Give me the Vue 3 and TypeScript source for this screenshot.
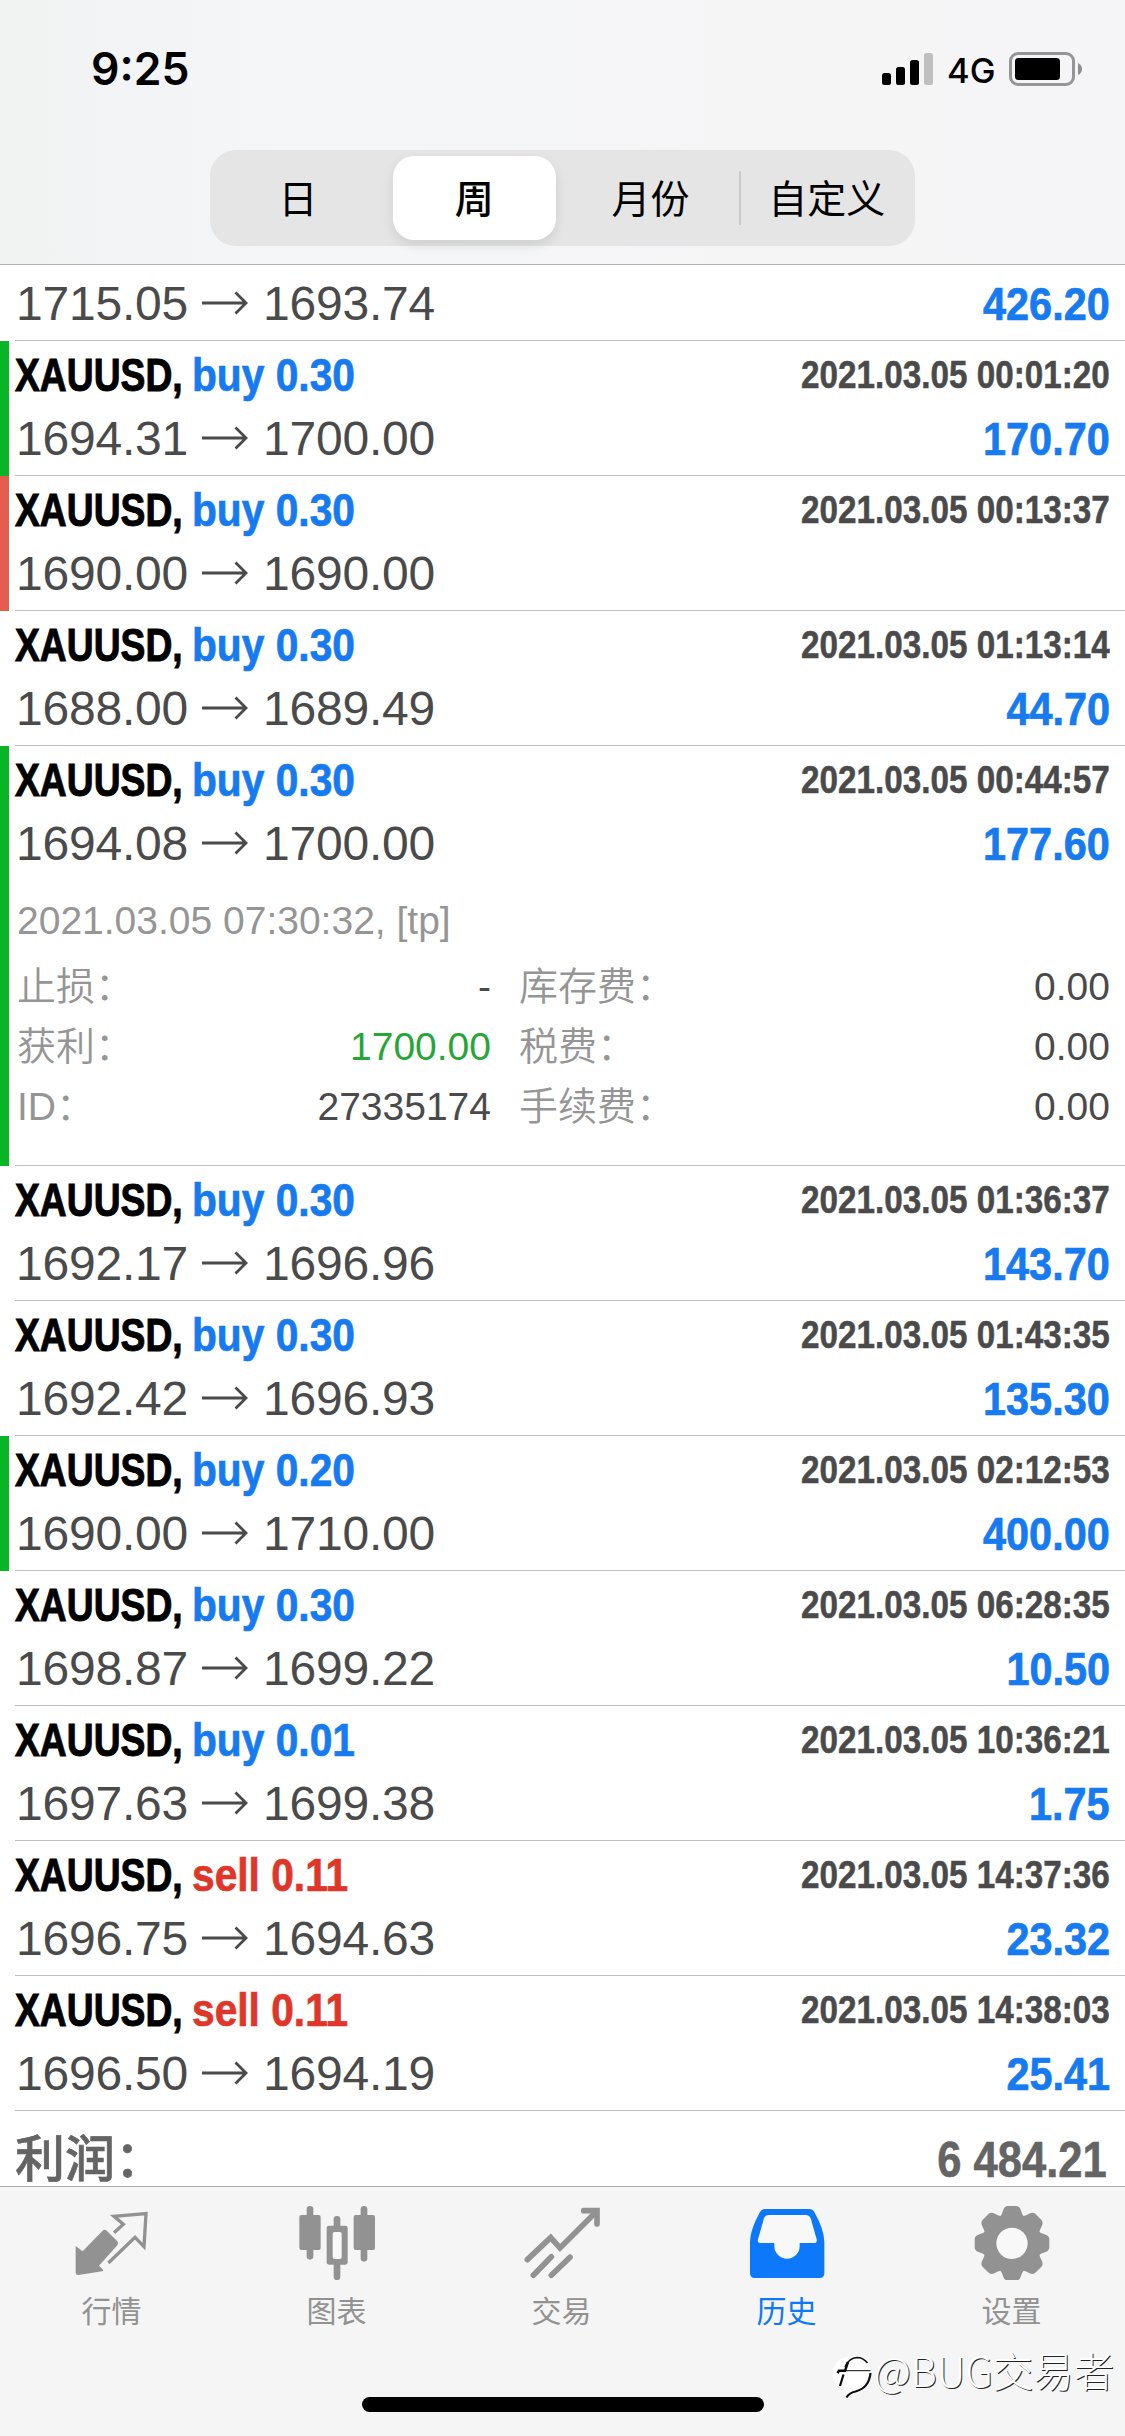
<script setup lang="ts">
interface Deal {
  side: 'buy' | 'sell'
  volume: string
  time: string
  open: string
  close: string
  profit: string
  mark?: 'tp' | 'sl'
  expanded?: boolean
}

const symbol = 'XAUUSD,'

const periods = ['日', '周', '月份', '自定义']
const activePeriod = 1

const deals: Deal[] = [
  { side: 'buy', volume: '0.30', time: '2021.03.05 00:01:20', open: '1694.31', close: '1700.00', profit: '170.70', mark: 'tp' },
  { side: 'buy', volume: '0.30', time: '2021.03.05 00:13:37', open: '1690.00', close: '1690.00', profit: '', mark: 'sl' },
  { side: 'buy', volume: '0.30', time: '2021.03.05 01:13:14', open: '1688.00', close: '1689.49', profit: '44.70' },
  { side: 'buy', volume: '0.30', time: '2021.03.05 00:44:57', open: '1694.08', close: '1700.00', profit: '177.60', mark: 'tp', expanded: true },
  { side: 'buy', volume: '0.30', time: '2021.03.05 01:36:37', open: '1692.17', close: '1696.96', profit: '143.70' },
  { side: 'buy', volume: '0.30', time: '2021.03.05 01:43:35', open: '1692.42', close: '1696.93', profit: '135.30' },
  { side: 'buy', volume: '0.20', time: '2021.03.05 02:12:53', open: '1690.00', close: '1710.00', profit: '400.00', mark: 'tp' },
  { side: 'buy', volume: '0.30', time: '2021.03.05 06:28:35', open: '1698.87', close: '1699.22', profit: '10.50' },
  { side: 'buy', volume: '0.01', time: '2021.03.05 10:36:21', open: '1697.63', close: '1699.38', profit: '1.75' },
  { side: 'sell', volume: '0.11', time: '2021.03.05 14:37:36', open: '1696.75', close: '1694.63', profit: '23.32' },
  { side: 'sell', volume: '0.11', time: '2021.03.05 14:38:03', open: '1696.50', close: '1694.19', profit: '25.41' },
]

const details = [
  { label: '止损：', value: '-', tone: '' },
  { label: '库存费：', value: '0.00', tone: '' },
  { label: '获利：', value: '1700.00', tone: 'green' },
  { label: '税费：', value: '0.00', tone: '' },
  { label: 'ID：', value: '27335174', tone: '' },
  { label: '手续费：', value: '0.00', tone: '' },
]

const teeth = [0, 45, 90, 135, 180, 225, 270, 315]
</script>

<template>
  <div class="screen">
    <header class="top">
      <div class="status">
        <span class="clock">9:25</span>
        <div class="indicators">
          <svg class="signal" width="51" height="34" viewBox="0 0 51 34">
            <rect x="0" y="21" width="9" height="12" rx="2.5" />
            <rect x="14" y="15" width="9" height="18" rx="2.5" />
            <rect x="28" y="8" width="9" height="25" rx="2.5" />
            <rect x="42" y="1" width="9" height="32" rx="2.5" fill="#bfbfc0" />
          </svg>
          <span class="network">4G</span>
          <svg class="battery" width="74" height="34" viewBox="0 0 74 34">
            <rect x="1.5" y="1.5" width="63" height="31" rx="7.5" fill="none" stroke="#969697" stroke-width="3" />
            <rect x="6" y="6" width="45" height="22" rx="3.5" />
            <path d="M69 11 Q73 13 73 17 Q73 21 69 23 Z" fill="#8f8f90" />
          </svg>
        </div>
      </div>
      <nav class="segments">
        <div
          v-for="(p, i) in periods"
          :key="p"
          class="segment"
          :class="{ active: i === activePeriod, divided: i === 3 }"
        >
          <span>{{ p }}</span>
        </div>
      </nav>
    </header>

    <main class="list">
      <section class="row partial">
        <div class="line prices">
          <span class="open">1715.05</span>
          <svg class="arrow" width="46" height="24" viewBox="0 0 46 24">
            <path d="M0 12 H44 M33.5 1.500 L44 12 L33.500 22.500" />
          </svg>
          <span class="close">1693.74</span>
          <span class="profit">426.20</span>
        </div>
      </section>

      <section v-for="d in deals" :key="d.time" class="row" :class="d.mark">
        <div class="line title">
          <span class="symbol">{{ symbol }}</span>
          <span class="deal" :class="d.side">{{ d.side }} {{ d.volume }}</span>
          <span class="time">{{ d.time }}</span>
        </div>
        <div class="line prices">
          <span class="open">{{ d.open }}</span>
          <svg class="arrow" width="46" height="24" viewBox="0 0 46 24">
            <path d="M0 12 H44 M33.5 1.500 L44 12 L33.500 22.500" />
          </svg>
          <span class="close">{{ d.close }}</span>
          <span class="profit">{{ d.profit }}</span>
        </div>
        <div v-if="d.expanded" class="details">
          <div class="comment">2021.03.05 07:30:32, [tp]</div>
          <div class="grid">
            <div v-for="item in details" :key="item.label" class="pair">
              <span>{{ item.label }}</span>
              <span class="value" :class="item.tone">{{ item.value }}</span>
            </div>
          </div>
        </div>
      </section>

      <section class="total">
        <span class="caption">利润：</span>
        <span class="sum">6 484.21</span>
      </section>
    </main>

    <footer class="bottom">
      <nav class="tabs">
        <div class="tab">
          <svg width="80" height="80" viewBox="34 30 240 240">
            <path fill="currentColor" d="M45 168 L66 184 L125 123 Q132 116 139 123 L170 154 Q175 160 170 166 L115 227 L128 240 Q129 243 124 244 L54 255 Q45 256 45 248 Z" />
            <path fill="none" stroke="currentColor" stroke-width="10" d="M160 128 L188 103 L160 79 L256 71 L250 170 L223 142 L143 219" />
          </svg>
          <span>行情</span>
        </div>
        <div class="tab">
          <svg width="80" height="80" viewBox="709 30 240 240" fill="currentColor">
            <rect x="716" y="75" width="64" height="105" rx="6" />
            <rect x="738" y="48" width="20" height="161" rx="10" />
            <rect x="819" y="78" width="20" height="192" rx="10" />
            <rect x="798" y="107" width="63" height="117" rx="7" />
            <rect x="816" y="126" width="27" height="81" rx="6" fill="#f8f8f8" />
            <rect x="879" y="75" width="64" height="105" rx="6" />
            <rect x="900" y="48" width="20" height="167" rx="10" />
          </svg>
          <span>图表</span>
        </div>
        <div class="tab">
          <svg width="80" height="80" viewBox="64 30 240 240" fill="none" stroke="currentColor" stroke-width="17" stroke-linecap="round">
            <path d="M80 209 L150 143 L178 174 L286 66" />
            <path d="M249 62 H289 V102" />
            <path d="M98 256 L152 200 M152 256 L208 202" />
          </svg>
          <span>交易</span>
        </div>
        <div class="tab selected">
          <svg width="80" height="80" viewBox="739 30 240 240">
            <path fill="currentColor" d="M792 57 H926 Q936 57 941 66 Q971 120 971 155 V250 Q971 264 957 264 H762 Q748 264 748 250 V155 Q748 120 778 66 Q783 57 792 57 Z" />
            <path fill="#f8f8f8" d="M805 75 H915 Q925 75 930 85 L948 148 Q950 159 940 159 H897 V168 A38 38 0 0 1 821 168 V159 H780 Q769 159 772 148 L790 85 Q794 75 805 75 Z" />
          </svg>
          <span>历史</span>
        </div>
        <div class="tab">
          <svg width="80" height="80" viewBox="-120 -130 240 240">
            <g fill="currentColor">
              <circle r="88" />
              <path
                v-for="a in teeth"
                :key="a"
                :transform="`rotate(${a})`"
                d="M-38 -76 Q-29 -88 -26 -101 Q-22 -112 -12 -112 H12 Q22 -112 26 -101 Q29 -88 38 -76 Z"
              />
            </g>
            <circle r="47" fill="#f8f8f8" />
          </svg>
          <span>设置</span>
        </div>
      </nav>
      <div class="home"></div>
      <div class="watermark">
        <svg width="43" height="56" viewBox="0 0 43 56">
          <path fill="#fff" d="M21 11 C33 10 41 18 40 30 C39 40 32 46 25 47.500 L16 54 L15 46 C6 42 1 36 1 28 C2 18 10 12 21 11 Z" />
          <g fill="none" stroke="#0c0c0c">
            <path stroke-width="1.500" d="M14 22 Q18 13 26 12.500 Q32 12.500 36.500 18" />
            <path stroke-width="2.500" d="M6.500 28 L8 25.800 H14 L17 17" />
            <path stroke-width="1" d="M13 25.700 H39.500" />
            <path stroke-width="2.200" d="M39.500 28 Q38 43 24.500 46.500 Q18 48 15.500 52.500" />
            <path stroke-width="2.200" d="M12.500 29.500 L9 41" />
          </g>
        </svg>
        <span>@BUG交易者</span>
      </div>
    </footer>
  </div>
</template>

<style>
body {
  margin: 0;
  background: #fff;
}
</style>

<style scoped>
.screen {
  width: 1125px;
  height: 2436px;
  display: flex;
  flex-direction: column;
  overflow: hidden;
  background: #fff;
  font-family: 'Liberation Sans', 'Noto Sans CJK SC', sans-serif;
  color: #4a4a4b;
}

.top {
  flex: none;
  box-sizing: border-box;
  height: 265px;
  border-bottom: 1px solid #b2b2b2;
  background: linear-gradient(90deg, #f1f2f2 0, #f5f6f8 300px, #f5f5f6 800px, #f5f5f7 100%);
  color: #000;
}

.status {
  display: flex;
  justify-content: space-between;
  height: 150px;
  padding: 0 42px 0 91px;
}

.clock {
  font: 600 44.500px/139px Inter, sans-serif;
}

.indicators {
  display: flex;
  align-items: flex-start;
  padding-top: 52px;
}

.network {
  box-sizing: border-box;
  width: 76px;
  padding-left: 14px;
  font: 500 34.500px/37px Inter, sans-serif;
}

.segments {
  display: flex;
  width: 705px;
  height: 96px;
  margin-left: 210px;
  border-radius: 26px;
  background: #e5e5e6;
}

.segment {
  display: flex;
  flex: 1;
  align-items: center;
  justify-content: center;
  height: 84px;
  margin: 6px 7px;
  font: 400 39px/80px 'Noto Sans CJK SC', sans-serif;
}

.segment span {
  height: 84px;
}

.segment.active {
  border-radius: 21px;
  background: #fff;
  font-weight: 500;
  box-shadow: 0 5px 12px rgba(0, 0, 0, 0.1);
}

.segment.divided {
  margin-left: 0;
  padding-left: 7px;
  background: linear-gradient(#cacacb, #cacacb) 0 50% / 2px 54px no-repeat;
}

.list {
  flex: none;
  height: 1921px;
}

.row {
  box-sizing: border-box;
  padding-bottom: 10px;
  border-left: 9px solid transparent;
  background: linear-gradient(#bfbfc0, #bfbfc0) 6px 100% / 100% 1px no-repeat;
}

.row.tp {
  border-left-color: #08b524;
}

.row.sl {
  border-left-color: #e45d4e;
}

.partial {
  padding-top: 11px;
}

.line {
  display: flex;
  align-items: flex-start;
  white-space: nowrap;
  padding-right: 15px;
}

.title {
  height: 70px;
  padding-left: 6px;
  font-size: 46px;
  line-height: 69px;
  font-weight: 700;
}

.symbol {
  width: 177px;
  color: #000;
  transform: scaleX(0.81);
  transform-origin: left;
  -webkit-text-stroke: 1px currentColor;
}

.deal {
  transform: scaleX(0.885);
  transform-origin: left;
  -webkit-text-stroke: 0.700px currentColor;
}

.buy {
  color: #167af0;
}

.sell {
  color: #e0362a;
}

.time {
  margin-left: auto;
  font-size: 38px;
  line-height: 68px;
  transform: scaleX(0.875);
  transform-origin: right;
  -webkit-text-stroke: 0.500px currentColor;
}

.prices {
  height: 55px;
  padding-left: 7px;
  font-size: 48px;
  line-height: 55px;
}

.open,
.close {
  letter-spacing: -0.200px;
}

.open {
  width: 186px;
}

.arrow {
  width: 46px;
  height: 24px;
  margin: 15px 15px 0 0;
  fill: none;
  stroke: #4a4a4b;
  stroke-width: 2.8;
}

.profit {
  margin-left: auto;
  font-size: 46px;
  line-height: 56px;
  font-weight: 700;
  color: #167af0;
  transform: scaleX(0.9);
  transform-origin: right;
  -webkit-text-stroke: 0.700px currentColor;
}

.details {
  height: 285px;
  padding-left: 8px;
  padding-right: 15px;
  font-size: 39px;
  color: #959595;
}

.comment {
  height: 66px;
  padding-top: 20px;
  line-height: 60px;
}

.grid {
  display: grid;
  grid-template-columns: 474px 1fr;
  column-gap: 28px;
}

.pair {
  display: flex;
  justify-content: space-between;
  height: 60px;
  line-height: 60px;
  font-weight: 350;
}

.value {
  color: #4a4a4b;
}

.green {
  color: #25a637;
}

.total {
  display: flex;
  justify-content: space-between;
  padding: 19px 18px 0 15px;
  font-size: 50px;
  line-height: 56px;
  color: #646465;
}

.caption {
  padding-top: 2px;
  font-weight: 500;
  -webkit-text-stroke: 0.600px currentColor;
}

.sum {
  font-weight: 700;
  padding-top: 2px;
  transform: scaleX(0.87);
  transform-origin: right;
  -webkit-text-stroke: 0.600px currentColor;
}

.bottom {
  position: relative;
  flex: 1;
  border-top: 1px solid #acacac;
  background: #f5f5f5;
}

.tabs {
  display: flex;
  margin-left: -1px;
  padding-top: 13px;
  height: 197px;
}

.tab {
  display: flex;
  width: 225px;
  flex-direction: column;
  align-items: center;
  font: 400 30px/42px 'Noto Sans CJK SC', sans-serif;
  color: #929292;
}

.tab span {
  margin-top: 8px;
}

.tab.selected {
  color: #0e78fb;
}

.home {
  width: 402px;
  height: 15px;
  margin-left: 362px;
  border-radius: 8px;
  background: #000;
}

.watermark {
  position: absolute;
  left: 831px;
  top: 158px;
  display: flex;
  align-items: flex-start;
  white-space: nowrap;
  font: 300 40.500px/50px 'Noto Sans CJK SC', sans-serif;
  color: #fff;
  text-shadow: 1px 1px 0.5px #222;
}
</style>
